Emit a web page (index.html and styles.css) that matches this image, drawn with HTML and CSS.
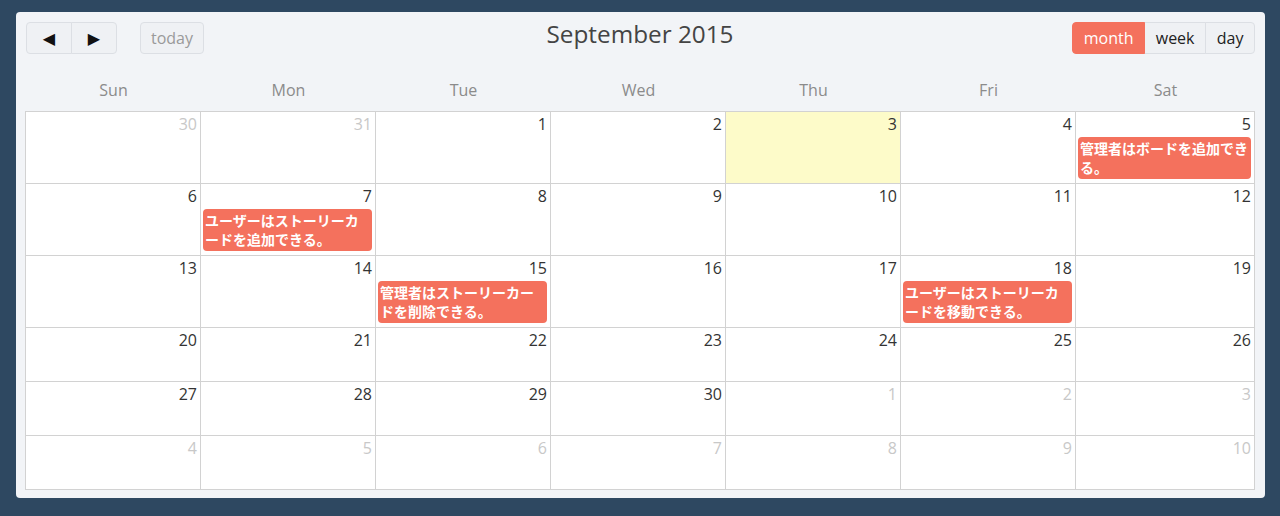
FILE: index.html
```html
<!DOCTYPE html>
<html lang="ja">
<head>
<meta charset="utf-8">
<title>Calendar</title>
<link rel="stylesheet" href="styles.css">
</head>
<body>
<div class="panel">
  <div class="toolbar">
    <div class="left">
      <div class="btn-group">
        <button class="btn arrow">&#9664;</button>
        <button class="btn arrow">&#9654;</button>
      </div>
      <button class="btn today">today</button>
    </div>
    <h2 class="title">September 2015</h2>
    <div class="right">
      <div class="btn-group">
        <button class="btn active">month</button>
        <button class="btn">week</button>
        <button class="btn">day</button>
      </div>
    </div>
  </div>
  <div class="dow">
    <div>Sun</div><div>Mon</div><div>Tue</div><div>Wed</div><div>Thu</div><div>Fri</div><div>Sat</div>
  </div>
  <div class="grid">
    <div class="cell other"><div class="num">30</div></div>
    <div class="cell other"><div class="num">31</div></div>
    <div class="cell"><div class="num">1</div></div>
    <div class="cell"><div class="num">2</div></div>
    <div class="cell today-cell"><div class="num">3</div></div>
    <div class="cell"><div class="num">4</div></div>
    <div class="cell"><div class="num">5</div><div class="event">管理者はボードを追加できる。</div></div>

    <div class="cell"><div class="num">6</div></div>
    <div class="cell"><div class="num">7</div><div class="event">ユーザーはストーリーカードを追加できる。</div></div>
    <div class="cell"><div class="num">8</div></div>
    <div class="cell"><div class="num">9</div></div>
    <div class="cell"><div class="num">10</div></div>
    <div class="cell"><div class="num">11</div></div>
    <div class="cell"><div class="num">12</div></div>

    <div class="cell"><div class="num">13</div></div>
    <div class="cell"><div class="num">14</div></div>
    <div class="cell"><div class="num">15</div><div class="event">管理者はストーリーカードを削除できる。</div></div>
    <div class="cell"><div class="num">16</div></div>
    <div class="cell"><div class="num">17</div></div>
    <div class="cell"><div class="num">18</div><div class="event">ユーザーはストーリーカードを移動できる。</div></div>
    <div class="cell"><div class="num">19</div></div>

    <div class="cell"><div class="num">20</div></div>
    <div class="cell"><div class="num">21</div></div>
    <div class="cell"><div class="num">22</div></div>
    <div class="cell"><div class="num">23</div></div>
    <div class="cell"><div class="num">24</div></div>
    <div class="cell"><div class="num">25</div></div>
    <div class="cell"><div class="num">26</div></div>

    <div class="cell"><div class="num">27</div></div>
    <div class="cell"><div class="num">28</div></div>
    <div class="cell"><div class="num">29</div></div>
    <div class="cell"><div class="num">30</div></div>
    <div class="cell other"><div class="num">1</div></div>
    <div class="cell other"><div class="num">2</div></div>
    <div class="cell other"><div class="num">3</div></div>

    <div class="cell other"><div class="num">4</div></div>
    <div class="cell other"><div class="num">5</div></div>
    <div class="cell other"><div class="num">6</div></div>
    <div class="cell other"><div class="num">7</div></div>
    <div class="cell other"><div class="num">8</div></div>
    <div class="cell other"><div class="num">9</div></div>
    <div class="cell other"><div class="num">10</div></div>
  </div>
</div>
</body>
</html>
```

FILE: styles.css
```css
* { box-sizing: border-box; }

html, body {
  margin: 0;
  height: 516px;
  overflow: hidden;
}

body {
  background: #2e4861;
  padding: 12px 15px 19px 16px;
  font-family: "Open Sans", "Noto Sans CJK JP", sans-serif;
  color: #333;
}

.panel {
  background: #f2f4f7;
  border-radius: 4px;
  padding: 10px 10px 8px 9px;
}

.toolbar {
  position: relative;
  display: flex;
  justify-content: space-between;
  align-items: center;
  height: 32px;
}

.left, .right {
  display: flex;
  align-items: center;
}

.left { padding-left: 1px; }

.btn-group { display: flex; }

.btn {
  height: 32px;
  margin: 0;
  padding: 0 10.6px;
  font-family: "Open Sans", sans-serif;
  font-size: 16px;
  color: #222;
  background: #eff1f4;
  border: 1px solid #dcdfe4;
  border-radius: 0;
  cursor: pointer;
}

.btn-group .btn + .btn { margin-left: -1px; }
.btn-group .btn:first-child { border-radius: 4px 0 0 4px; }
.btn-group .btn:last-child { border-radius: 0 4px 4px 0; }

.arrow {
  width: 46px;
  padding: 0;
  font-family: "DejaVu Sans", sans-serif;
  font-size: 16px;
  color: #111;
}

.today {
  margin-left: 23px;
  border-radius: 4px;
  color: #9a9a9a;
  width: 64px;
  padding: 0;
}

.btn.active {
  background: #f4715d;
  border-color: #f4715d;
  color: #fff;
  position: relative;
  z-index: 1;
}

.title {
  position: absolute;
  left: 0;
  right: 0;
  top: -6px;
  margin: 0;
  text-align: center;
  font-size: 24.3px;
  font-weight: 400;
  line-height: 36px;
  color: #444;
  pointer-events: none;
}

.dow {
  display: grid;
  grid-template-columns: repeat(6, 175px) 1fr;
  height: 57px;
  align-items: end;
  padding-bottom: 10px;
  padding-left: 1px;
}

.dow div {
  text-align: center;
  font-size: 16px;
  line-height: 22px;
  color: #8b8b8b;
}

.grid {
  display: grid;
  grid-template-columns: repeat(6, 175px) 1fr;
  border-top: 1px solid #d2d2d2;
  border-left: 1px solid #d2d2d2;
}

.cell {
  background: #fff;
  border-right: 1px solid #d2d2d2;
  border-bottom: 1px solid #d2d2d2;
  min-height: 54px;
  padding-bottom: 4px;
}

.today-cell { background: #fdfbc9; }

.num {
  text-align: right;
  font-size: 16px;
  line-height: 22px;
  padding: 1px 3px 0 0;
  height: 24px;
  color: #333;
}

.other .num { color: #c8c8c8; }

.event {
  margin: 1px 3px 0 2px;
  padding: 2px 2px;
  background: #f4715d;
  border-radius: 4px;
  color: #fff;
  font-family: "Noto Sans CJK JP", sans-serif;
  font-size: 14px;
  font-weight: 700;
  line-height: 19px;
}
```
